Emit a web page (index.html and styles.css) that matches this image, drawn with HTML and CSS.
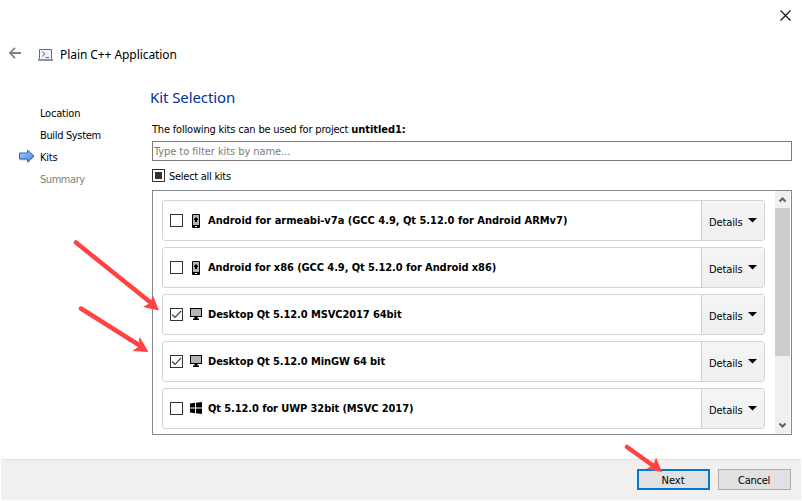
FILE: index.html
```html
<!DOCTYPE html>
<html lang="en">
<head>
<meta charset="utf-8">
<title>Plain C++ Application</title>
<link rel="stylesheet" href="styles.css">
</head>
<body>
<svg class="defs" width="0" height="0">
  <defs>
    <symbol id="phone" viewBox="0 0 12 14"><rect x="2" y="0" width="8" height="14" rx="1" fill="#000"/><rect x="3" y="1" width="6" height="10" fill="#b4b4b4"/><path d="M6 3l2 2v1h-1v2h-2v-2h-1v-1z" fill="#000"/><path d="M5 12h2v1h-2z" fill="#fff"/></symbol>
    <symbol id="monitor" viewBox="0 0 12 12"><rect x=".5" y=".5" width="11" height="8" fill="#b4b4b4" stroke="#000"/><path d="M4.500 9h3v1.500h1.500v1.500h-6v-1.500h1.500z" fill="#000"/></symbol>
    <symbol id="windows" viewBox="0 0 12 12"><path d="M0 1.500l5-.7v4.700h-5zM6 .7l6-.7v5.500h-6zM0 6.500h5v4.700l-5-.7zM6 6.500h6v5.500l-6-.7z" fill="#000"/></symbol>
    <symbol id="check" viewBox="0 0 11 11"><path d="M1 5.500l3 3 6-6.500" fill="none" stroke="#444" stroke-width="1.200"/></symbol>
  </defs>
</svg>
<main class="wizard">
  <header class="titlebar">
    <svg class="close" width="11" height="11" viewBox="0 0 11 11"><path d="M.5.5l10 10M10.500.5l-10 10" stroke="#111" stroke-width="1.100"/></svg>
  </header>
  <div class="heading">
    <svg class="back" width="12" height="12" viewBox="0 0 12 12"><path d="M6 .8L1 6l5 5.200M1 6h11" fill="none" stroke="#808080" stroke-width="1.800"/></svg>
    <svg class="app-icon" width="16" height="12" viewBox="0 0 16 12"><path d="M1.500 10V.5h12V10" fill="#f0f3fa" stroke="#636b80"/><path d="M0 10h15v2H0z" fill="#8d94a6"/><path d="M4 2.500l3 2.500-3 2.500M7.500 8.500h3.500" fill="none" stroke="#636b80"/></svg>
    <span class="app-name">Plain C++ Application</span>
  </div>
  <div class="body">
    <nav class="steps">
      <div class="step"><span class="t-location">Location</span></div>
      <div class="step"><span class="t-build">Build System</span></div>
      <div class="step current"><svg class="step-arrow" width="17" height="15" viewBox="0 0 17 15"><defs><linearGradient id="blue" x1="0" y1="0" x2="1" y2="1"><stop offset="0" stop-color="#a8ceff"/><stop offset="1" stop-color="#3f86e6"/></linearGradient></defs><path d="M1 5h8V2l6.500 6L9 14.500v-3H1z" fill="#ccc"/><path d="M.5 4h8V1l6.500 6-6.500 6v-3h-8z" fill="url(#blue)" stroke="#39669f"/></svg><span class="t-kits">Kits</span></div>
      <div class="step disabled"><span class="t-summary">Summary</span></div>
    </nav>
    <section class="page">
      <h1>Kit Selection</h1>
      <p class="intro"><span>The following kits can be used for project </span><b>untitled1:</b></p>
      <div class="filter"><span>Type to filter kits by name...</span></div>
      <div class="select-all"><i class="box partial"></i><span>Select all kits</span></div>
      <div class="kits">
        <div class="rows">
          <div class="kit"><i class="box"></i><svg class="icon" width="12" height="14"><use href="#phone"/></svg><b class="k1">Android for armeabi-v7a (GCC 4.9, Qt 5.12.0 for Android ARMv7)</b><div class="details"><span>Details</span><i class="drop"></i></div></div>
          <div class="kit"><i class="box"></i><svg class="icon" width="12" height="14"><use href="#phone"/></svg><b class="k2">Android for x86 (GCC 4.9, Qt 5.12.0 for Android x86)</b><div class="details"><span>Details</span><i class="drop"></i></div></div>
          <div class="kit"><i class="box"><svg width="11" height="11"><use href="#check"/></svg></i><svg class="icon raised" width="12" height="12"><use href="#monitor"/></svg><b class="k3">Desktop Qt 5.12.0 MSVC2017 64bit</b><div class="details"><span>Details</span><i class="drop"></i></div></div>
          <div class="kit"><i class="box"><svg width="11" height="11"><use href="#check"/></svg></i><svg class="icon raised" width="12" height="12"><use href="#monitor"/></svg><b class="k4">Desktop Qt 5.12.0 MinGW 64 bit</b><div class="details"><span>Details</span><i class="drop"></i></div></div>
          <div class="kit"><i class="box"></i><svg class="icon raised" width="12" height="12"><use href="#windows"/></svg><b class="k5">Qt 5.12.0 for UWP 32bit (MSVC 2017)</b><div class="details"><span>Details</span><i class="drop"></i></div></div>
        </div>
        <div class="scrollbar">
          <svg width="15" height="17" viewBox="0 0 15 17"><path d="M4.500 10.500l3-3 3 3" fill="none" stroke="#606060" stroke-width="2"/></svg>
          <div class="thumb"></div>
          <svg class="down" width="15" height="17" viewBox="0 0 15 17"><path d="M4.500 6.500l3 3 3-3" fill="none" stroke="#606060" stroke-width="2"/></svg>
        </div>
      </div>
    </section>
  </div>
  <footer class="actions">
    <div class="button primary"><span>Next</span></div>
    <div class="button"><span class="t-cancel">Cancel</span></div>
  </footer>
</main>
<svg class="arrows" width="802" height="501" viewBox="0 0 802 501" fill="#ff4343" stroke="#ff4343">
  <path d="M76 242.500L150 302M81 308.500L139 345M627 447l28 20" stroke-width="4.500" stroke-linecap="round"/>
  <path d="M159 310.500l-16-3.500 7-4 3-7.500zM148.500 352l-16-1 7-5-.5-7.500 1-1zM662 472l-15.500-3 7-4 2.500-7.500z" stroke="none"/>
</svg>
</body>
</html>
```
FILE: styles.css
```css
* { box-sizing: border-box; }
body { margin: 0; width: 802px; height: 501px; overflow: hidden; background: #fff; color: #000; font: 11px/16px "DejaVu Sans Condensed", "DejaVu Sans", sans-serif; }
.defs { position: absolute; }
svg { display: block; flex: none; }
span, b { white-space: pre; }
.wizard { display: flex; flex-direction: column; height: 501px; padding: 0 1px 1px; }
.titlebar { height: 40px; padding: 10px 10px 0 0; display: flex; justify-content: flex-end; }
.heading { height: 46px; padding-left: 8px; display: flex; align-items: flex-start; }
.back { margin-top: 7px; }
.app-icon { margin: 9px 0 0 17px; }
.app-name { margin: 6px 0 0 6px; font: 12px/18px "Noto Sans", sans-serif; letter-spacing: -.07px; }
.body { display: flex; height: 373px; }
.steps { width: 151px; padding-top: 17px; }
.step { height: 22px; line-height: 22px; padding-left: 39px; display: flex; }
.step.current { padding-left: 18px; }
.step-arrow { margin: 2px 4px 0 0; }
.t-location, .t-kits { letter-spacing: -.2px; }
.t-build { letter-spacing: -.35px; }
.t-summary { letter-spacing: -.45px; }
.disabled { color: #808080; }
.page { width: 640px; }
h1 { margin: -1px 0 0 -2px; font: 400 15px/24px "Noto Sans", sans-serif; letter-spacing: -.08px; color: #003399; height: 24px; }
.intro { margin: 13px 0 3px; line-height: 16px; height: 16px; }
.intro span { letter-spacing: -.19px; }
.intro b { letter-spacing: -.06px; }
.filter { height: 20px; border: 1px solid #7a7a7a; padding-left: 1px; line-height: 20px; color: #7d7d7d; letter-spacing: -.07px; }
.select-all { display: flex; margin-top: 8px; height: 21px; line-height: 15px; letter-spacing: -.27px; }
.select-all .box { margin-right: 4px; }
.box { display: block; flex: none; width: 13px; height: 13px; border: 1px solid #333; background: #fff; }
.partial { padding: 2px; background: #333 content-box; }
.kits { height: 245px; border: 1px solid #828790; display: flex; justify-content: space-between; }
.rows { width: 612px; padding: 9px 0 0 9px; display: grid; grid-auto-rows: 41px; row-gap: 6px; align-content: start; }
.kit { border: 1px solid #d4d4d4; border-radius: 3px; display: flex; align-items: center; padding-left: 7px; width: 603px; }
.icon { margin: 0 6px 0 7px; }
.raised { margin-bottom: 1px; }
.kit b { flex: none; padding-top: 1px; }
.k1 { letter-spacing: -.015px; }
.k2 { letter-spacing: -.08px; }
.k3, .k4, .k5 { letter-spacing: -.09px; }
.details { width: 63px; height: 39px; margin-left: auto; border-left: 1px solid #d0d0d0; background: linear-gradient(#f5f5f5, #efefef); display: flex; align-items: center; padding: 4px 0 0 7px; letter-spacing: -.12px; }
.drop { width: 10px; height: 5px; margin: -5px 0 0 5px; background: #000; clip-path: polygon(0 0, 100% 0, 50% 100%); }
.scrollbar { width: 16px; border-right: 1px solid #fff; background: #f0f0f0; display: flex; flex-direction: column; }
.thumb { height: 148px; background: #cdcdcd; }
.down { margin-top: auto; }
.actions { height: 41px; border-top: 1px solid #dfdfdf; background: #f0f0f0; display: flex; gap: 8px; justify-content: flex-end; padding: 9px 10px 0 0; }
.button { width: 73px; height: 21px; border: 1px solid #adadad; background: #e1e1e1; line-height: 21px; text-align: center; padding-right: 1px; }
.primary { border: 2px solid #0078d7; line-height: 19px; }
.t-cancel { letter-spacing: -.25px; }
.arrows { position: absolute; left: 0; top: 0; }
```
